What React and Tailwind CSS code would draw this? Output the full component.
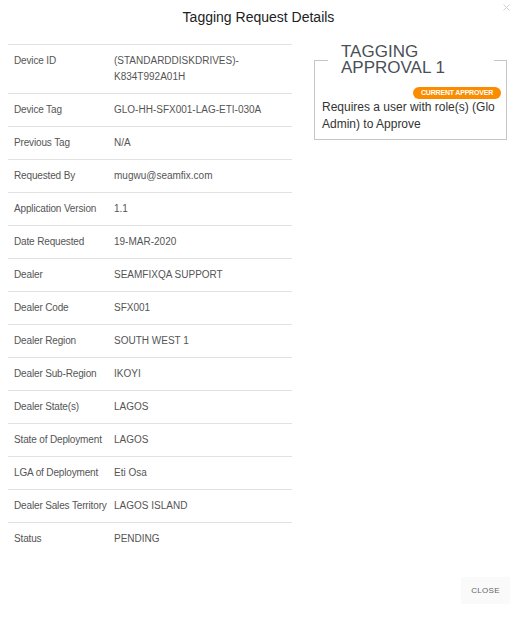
import React from "react";

const rows = [
    { label: "Device ID", value: "(STANDARDDISKDRIVES)-\nK834T992A01H" },
    { label: "Device Tag", value: "GLO-HH-SFX001-LAG-ETI-030A" },
    { label: "Previous Tag", value: "N/A" },
    { label: "Requested By", value: "mugwu@seamfix.com" },
    { label: "Application Version", value: "1.1" },
    { label: "Date Requested", value: "19-MAR-2020" },
    { label: "Dealer", value: "SEAMFIXQA SUPPORT" },
    { label: "Dealer Code", value: "SFX001" },
    { label: "Dealer Region", value: "SOUTH WEST 1" },
    { label: "Dealer Sub-Region", value: "IKOYI" },
    { label: "Dealer State(s)", value: "LAGOS" },
    { label: "State of Deployment", value: "LAGOS" },
    { label: "LGA of Deployment", value: "Eti Osa" },
    { label: "Dealer Sales Territory", value: "LAGOS ISLAND" },
    { label: "Status", value: "PENDING" },
];

const App = () => {
    return (
        <div className="relative w-[517px] h-[617px] bg-white flex flex-col font-['Liberation_Sans',Arial,sans-serif] text-[#333]">
            {/* close icon */}
            <svg
                className="absolute right-[7px] top-[4px]"
                width="7"
                height="7"
                viewBox="0 0 7 7"
            >
                <path d="M0.5 0.5L6.5 6.5M6.5 0.5L0.5 6.5" stroke="#cfcfcf" strokeWidth="1" />
            </svg>

            <div className="h-[44px] pt-[9px] text-center text-[14px] leading-[17px] text-[#222]">
                Tagging Request Details
            </div>

            <div className="flex px-2 items-start">
                <div className="w-[284px] border-t border-[#e2e2e2] text-[10px] leading-[16px] text-[#555]">
                    {rows.map((row, i) => (
                        <div
                            key={row.label}
                            className={
                                i < rows.length - 1
                                    ? "flex py-2 border-b border-[#e2e2e2]"
                                    : "flex py-2"
                            }
                        >
                            <div className="w-[100px] pl-[6px] shrink-0 whitespace-nowrap tracking-[-0.15px]">
                                {row.label}
                            </div>
                            <div className="pl-[6px] whitespace-pre-line">{row.value}</div>
                        </div>
                    ))}
                </div>

                <fieldset className="ml-[22px] w-[193px] border border-[#c6c6c6] pb-[6px] flex flex-col">
                    <legend className="ml-[13px] w-[166px] px-[13px] text-[17px] leading-[16px] text-[#4a4f57]">
                        TAGGING APPROVAL 1
                    </legend>
                    <div className="flex justify-end mt-[11px] pr-[5px]">
                        <span className="h-[12px] w-[88px] rounded-full bg-[#fb8c00] text-white text-[7px] leading-[12px] font-bold text-center tracking-[-0.2px]">
                            CURRENT APPROVER
                        </span>
                    </div>
                    <div className="px-[7px] text-[12px] leading-[17px] text-[#333]">
                        Requires a user with role(s) (Glo Admin) to Approve
                    </div>
                </fieldset>
            </div>

            <div className="mt-auto flex justify-end pr-[7px] pb-[13px]">
                <button className="w-[49px] h-[27px] bg-[#fafafa] rounded-[2px] text-[8px] text-[#666] tracking-[0.3px]">
                    CLOSE
                </button>
            </div>
        </div>
    );
};

export default App;
